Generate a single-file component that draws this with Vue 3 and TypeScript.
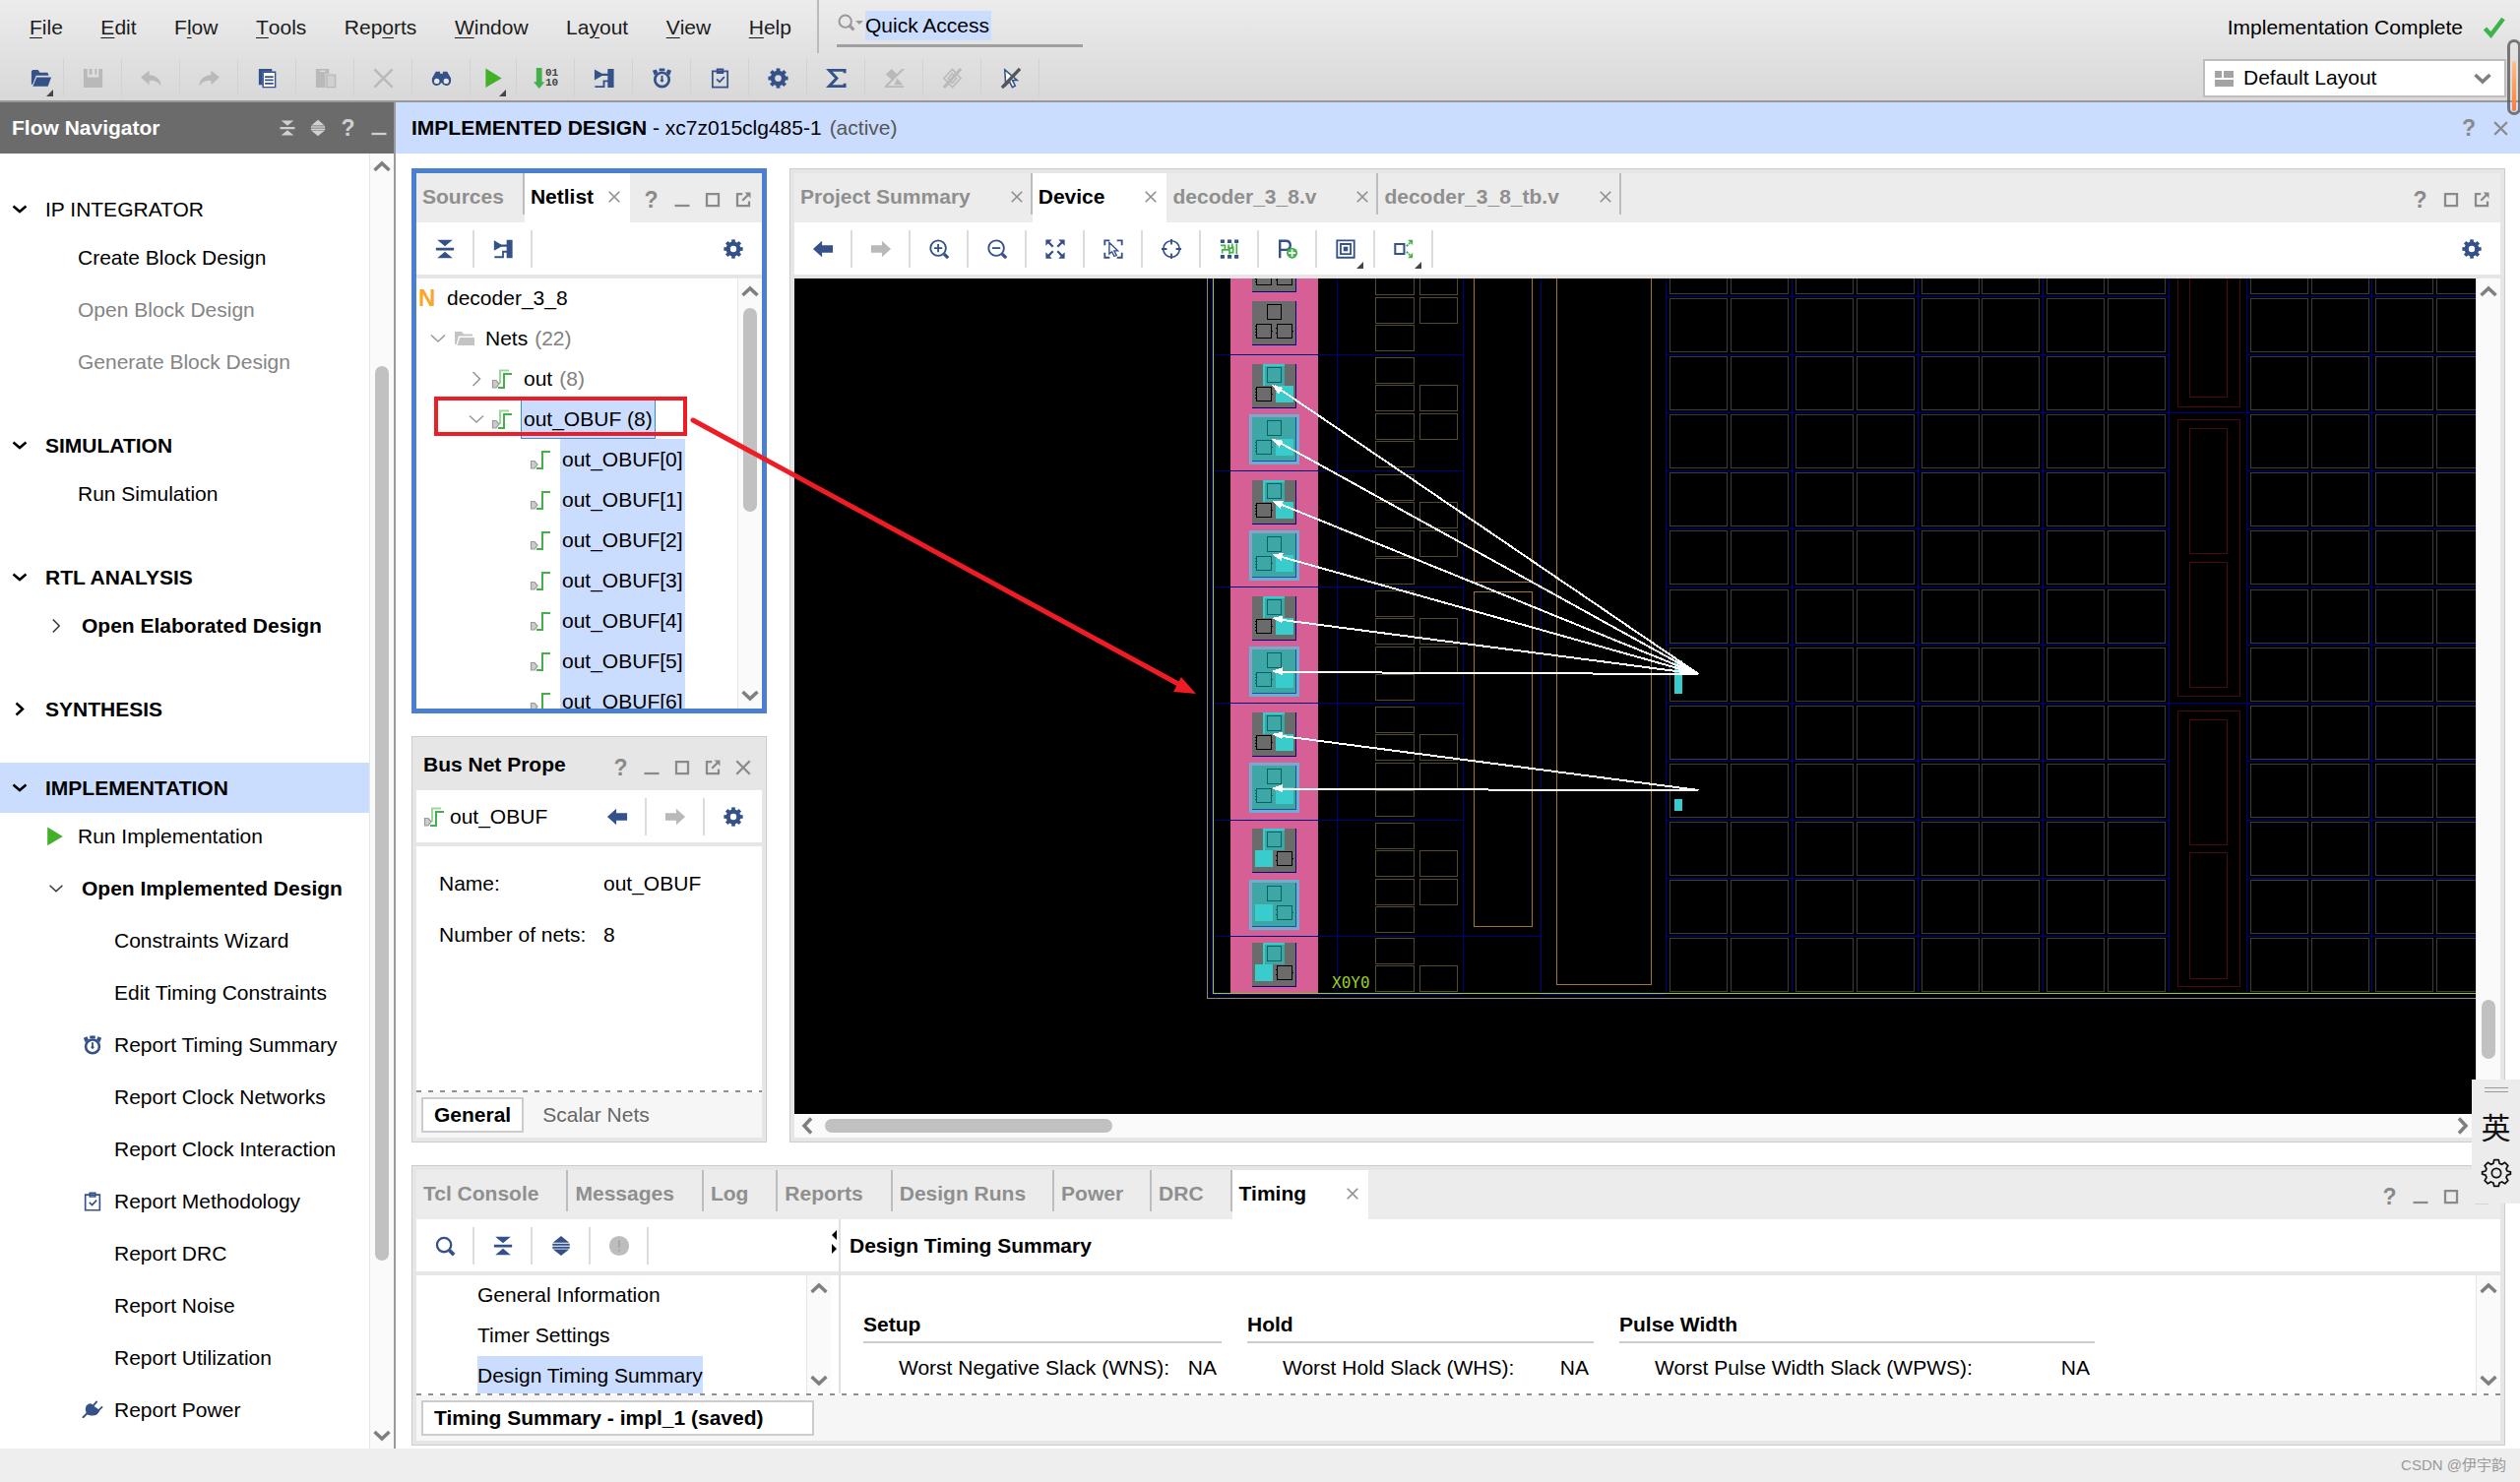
<script setup lang="ts">
import { h, ref } from 'vue'

interface NavItem { text: string; kind?: 'bold' | 'leaf' | 'off'; icon?: string }
interface NavSection { title: string; bold: boolean; open: boolean; active?: boolean; items: NavItem[] }

const Icon = (p: { n: string }) =>
  h('svg', { class: 'ic', viewBox: '0 0 24 24', 'aria-hidden': 'true' }, [h('use', { href: '#' + p.n })])
Icon.props = ['n']

const Scroll = (p: { parts: number[]; across?: boolean }) =>
  h('div', { class: ['scroll', p.across ? 'across' : 'down'] }, [
    h('button', { class: 'arrow first', 'aria-label': 'Scroll back' }, [h(Icon, { n: 'i-chev' })]),
    h('span', { style: { flexGrow: p.parts[0] } }),
    h('span', { class: 'thumb', style: { flexGrow: p.parts[1] } }),
    h('span', { style: { flexGrow: p.parts[2] } }),
    h('button', { class: 'arrow last', 'aria-label': 'Scroll on' }, [h(Icon, { n: 'i-chev' })]),
  ])
Scroll.props = ['parts', 'across']

const menus = [
  ['', 'F', 'ile'], ['', 'E', 'dit'], ['F', 'l', 'ow'], ['', 'T', 'ools'], ['Rep', 'o', 'rts'],
  ['', 'W', 'indow'], ['La', 'y', 'out'], ['', 'V', 'iew'], ['', 'H', 'elp'],
]

const tools = [
  { n: 'i-open', l: 'Open', drop: true }, { n: 'i-save', l: 'Save', off: true }, { n: 'i-undo', l: 'Undo', off: true },
  { n: 'i-redo', l: 'Redo', off: true }, { n: 'i-copy', l: 'Copy' }, { n: 'i-paste', l: 'Paste', off: true },
  { n: 'i-x', l: 'Delete', off: true }, { n: 'i-find', l: 'Find' }, { n: 'i-play', l: 'Run', drop: true },
  { n: 'i-bits', l: 'Generate bitstream' }, { n: 'i-net', l: 'Schematic' }, { n: 'i-timer', l: 'Timing' },
  { n: 'i-clip', l: 'Methodology' }, { n: 'i-gear', l: 'Settings' }, { n: 'i-sigma', l: 'Summary' },
  { n: 'i-mark', l: 'Unmark', off: true }, { n: 'i-high', l: 'Unhighlight', off: true }, { n: 'i-unsel', l: 'Unselect' },
]

const sections: NavSection[] = [
  { title: 'IP INTEGRATOR', bold: false, open: true, items: [
    { text: 'Create Block Design' }, { text: 'Open Block Design', kind: 'off' }, { text: 'Generate Block Design', kind: 'off' }] },
  { title: 'SIMULATION', bold: true, open: true, items: [{ text: 'Run Simulation' }] },
  { title: 'RTL ANALYSIS', bold: true, open: true, items: [{ text: 'Open Elaborated Design', kind: 'bold', icon: 'i-thin-right' }] },
  { title: 'SYNTHESIS', bold: true, open: false, items: [] },
  { title: 'IMPLEMENTATION', bold: true, open: true, active: true, items: [
    { text: 'Run Implementation', icon: 'i-play' },
    { text: 'Open Implemented Design', kind: 'bold', icon: 'i-thin-down' },
    { text: 'Constraints Wizard', kind: 'leaf' },
    { text: 'Edit Timing Constraints', kind: 'leaf' },
    { text: 'Report Timing Summary', kind: 'leaf', icon: 'i-timer' },
    { text: 'Report Clock Networks', kind: 'leaf' },
    { text: 'Report Clock Interaction', kind: 'leaf' },
    { text: 'Report Methodology', kind: 'leaf', icon: 'i-clip' },
    { text: 'Report DRC', kind: 'leaf' },
    { text: 'Report Noise', kind: 'leaf' },
    { text: 'Report Utilization', kind: 'leaf' },
    { text: 'Report Power', kind: 'leaf', icon: 'i-plug' }] },
]

const bits = [0, 1, 2, 3, 4, 5, 6]
const deviceTabs = ['Project Summary', 'Device', 'decoder_3_8.v', 'decoder_3_8_tb.v']
const deviceTools = [
  { n: 'i-back', l: 'Back' }, { n: 'i-fwd', l: 'Forward', off: true }, { n: 'i-zin', l: 'Zoom in' }, { n: 'i-zout', l: 'Zoom out' },
  { n: 'i-fit', l: 'Zoom fit' }, { n: 'i-sel', l: 'Select area' }, { n: 'i-target', l: 'Autofit' }, { n: 'i-route', l: 'Routing' },
  { n: 'i-pblock', l: 'Draw Pblock' }, { n: 'i-cell', l: 'Cell mode', drop: true }, { n: 'i-conn', l: 'Connectivity', drop: true },
]
const logTabs = ['Tcl Console', 'Messages', 'Log', 'Reports', 'Design Runs', 'Power', 'DRC']
const timing = [
  { title: 'Setup', label: 'Worst Negative Slack (WNS):', value: 'NA' },
  { title: 'Hold', label: 'Worst Hold Slack (WHS):', value: 'NA' },
  { title: 'Pulse Width', label: 'Worst Pulse Width Slack (WPWS):', value: 'NA' },
]
const query = ref('Quick Access')

// Device floorplan, in fabric coordinates
type Tile = { y: number; big: boolean; used: 'right' | 'left' | '' }
const tiles: Tile[] = [
  { y: 252, big: false, used: '' }, { y: 306, big: false, used: '' },
  { y: 370, big: false, used: 'right' }, { y: 424, big: true, used: 'right' },
  { y: 488, big: false, used: 'right' }, { y: 542, big: true, used: 'right' },
  { y: 606, big: false, used: 'right' }, { y: 660, big: true, used: 'right' },
  { y: 724, big: false, used: 'right' }, { y: 778, big: true, used: 'right' },
  { y: 842, big: false, used: 'left' }, { y: 897, big: true, used: 'left' },
  { y: 958, big: false, used: 'left' },
]
const ioRows = [360, 478, 596, 714, 833]
const olive: [number, number][] = []
for (const s of [245, 363, 482, 600, 718, 836, 953]) {
  const n = s === 953 ? 2 : 4
  for (let i = 0; i < n; i++) {
    olive.push([1397, s + i * 28 + (i > 1 ? 1 : 0)])
    if (i === 1 || i === 2) olive.push([1442, s + i * 28 + (i > 1 ? 1 : 0)])
  }
}
const clbCols = [1696, 1758, 1824, 1886, 1952, 2013, 2079, 2141, 2286, 2348, 2413, 2475]
const clbRows = [244, 303, 362, 421, 480, 539, 599, 658, 717, 776, 835, 894, 953]
const clbLines = [301, 360, 419, 478, 537, 596, 655, 714, 773, 833, 892, 951]
const clbVert = [1692, 1820, 1948, 2075, 2203, 2282, 2409]
const flights = [391, 446, 509, 563, 628, 682].map(y => ({ y, sy: 685 })).concat([746, 801].map(y => ({ y, sy: 803 })))
const head = (f: { y: number; sy: number }) => (Math.atan2(f.sy - f.y, 1725 - 1292) * 180) / Math.PI
</script>

<template>
  <div class="app">
    <svg class="defs" aria-hidden="true">
      <symbol id="i-chev" viewBox="0 0 24 24"><path d="M4.500 16 12 9l7.500 7" fill="none" stroke="#7f7f7f" stroke-width="3.500" /></symbol>
      <symbol id="i-down" viewBox="0 0 24 24"><path d="M5.500 8.500 12 14l6.500-5.500" fill="none" stroke="currentColor" stroke-width="2.500" /></symbol>
      <symbol id="i-right" viewBox="0 0 24 24"><path d="m8.500 5.500 6.500 6-6.500 6" fill="none" stroke="currentColor" stroke-width="2.500" /></symbol>
      <symbol id="i-thin-down" viewBox="0 0 24 24"><path d="M5 8.500 12 15l7-6.500" fill="none" stroke="currentColor" stroke-width="1.600" /></symbol>
      <symbol id="i-thin-right" viewBox="0 0 24 24"><path d="m8.500 5 7 7-7 7" fill="none" stroke="currentColor" stroke-width="1.600" /></symbol>
      <symbol id="i-open" viewBox="0 0 24 24"><path fill="currentColor" d="M2 19V4.500L3.500 3H9l2 3h8l1 1.500V9H7L3.500 18zM7.500 11H23l-3.500 9.500h-16z" /></symbol>
      <symbol id="i-save" viewBox="0 0 24 24"><path fill="currentColor" d="M2 2h4v9h12V2h4v20H2zM8 2h3v6H8zm6 0h2v6h-2z" /></symbol>
      <symbol id="i-undo" viewBox="0 0 24 24"><path fill="currentColor" d="M1 11 10 4v4.500C18 9 22 13 22.500 20 19 15.500 15 14 10 14.500V19z" /></symbol>
      <symbol id="i-redo" viewBox="0 0 24 24"><path fill="currentColor" d="m23 11-9-7v4.500C6 9 2 13 1.500 20 5 15.500 9 14 14 14.500V19z" /></symbol>
      <symbol id="i-copy" viewBox="0 0 24 24"><path fill="currentColor" d="M3 2h14v3H7v14H3z" /><path fill="#fff" stroke="currentColor" stroke-width="1.500" d="M7.500 5.500H20.500V21.500H7.500z" /><path stroke="currentColor" stroke-width="1.800" d="M9.500 10.500h9M9.500 14h9M9.500 17.500h9" /></symbol>
      <symbol id="i-paste" viewBox="0 0 24 24"><path fill="currentColor" d="M2 2h14v5h-4v15H2z" /><path fill="#d0d0d0" stroke="currentColor" stroke-width="1.500" d="M13.500 8.500H22.500V21.500h-9z" /><path stroke="#ddd" stroke-width="1.500" d="M6 4.500h6" /></symbol>
      <symbol id="i-x" viewBox="0 0 24 24"><path fill="none" stroke="currentColor" stroke-width="2.500" d="M2.500 2.500 21.500 21.500M21.500 2.500 2.500 21.500" /></symbol>
      <symbol id="i-find" viewBox="0 0 24 24"><path fill="currentColor" d="M6 5h4.500v2h3V5H18l4 7v3.500a5 5 0 0 1-9.500 1.500h-1A5 5 0 0 1 2 15.500V12z" /><circle cx="7" cy="15" r="2.800" fill="#e6e8ee" /><circle cx="17" cy="15" r="2.800" fill="#e6e8ee" /></symbol>
      <symbol id="i-play" viewBox="0 0 24 24"><path fill="#43b02a" d="M3.500 1.500 20.500 12 3.500 22z" /></symbol>
      <symbol id="i-bits" viewBox="0 0 24 24"><path fill="#43b04a" d="M4 1h6v15h3L7 23 1 16h3z" /></symbol>
      <symbol id="i-net" viewBox="0 0 24 24"><path fill="currentColor" d="M2 2.500 10 7h6V2h6.500v20H16v-6h-3v6H2.500v-2H11v-6h5V9.500h-6L2 14z" /></symbol>
      <symbol id="i-timer" viewBox="0 0 24 24"><circle cx="12" cy="13.500" r="7.500" fill="none" stroke="currentColor" stroke-width="2.800" /><path fill="currentColor" d="M9 1.500h6v3H9zM2 4l4-1.500L7.500 6 4 9zM22 4l-4-1.500L16.500 6 20 9zM11 9h2v4l1 1.500-2 2-2-2L11 13z" /></symbol>
      <symbol id="i-clip" viewBox="0 0 24 24"><path fill="none" stroke="currentColor" stroke-width="1.800" d="M4 4.500h16v17H4zM9 2.500h6v4H9zM8.500 13l3 3 5-5.500" /></symbol>
      <symbol id="i-gear" viewBox="0 0 24 24"><circle cx="12" cy="12" r="5.800" fill="none" stroke="currentColor" stroke-width="4.600" /><rect v-for="a in 8" :key="a" x="10" y="1.500" width="4" height="4.500" fill="currentColor" :transform="`rotate(${a * 45} 12 12)`" /></symbol>
      <symbol id="i-sigma" viewBox="0 0 24 24"><path fill="none" stroke="currentColor" stroke-width="3" d="M21 6.500V3.500H4.500L12.500 12l-8 8.500H21v-3" /></symbol>
      <symbol id="i-mark" viewBox="0 0 24 24"><path fill="currentColor" d="m3 8 6-6 6 6-5 6zM2 20h20v2H2zM15 12l6 7h-9zM20 2h3L5 20H2z" /></symbol>
      <symbol id="i-high" viewBox="0 0 24 24"><path fill="none" stroke="currentColor" stroke-width="1.600" d="m12 2.500 9 9.500-9 9.500L3 12zM12 7l4.500 5-4.500 5-4.500-5z" /><path stroke="currentColor" stroke-width="3" d="M21 2 3 22" /></symbol>
      <symbol id="i-unsel" viewBox="0 0 24 24"><path fill="#fff" stroke="currentColor" stroke-width="1.600" d="m6 3 13 11h-5l3 6-3 1.500-3-6-4 4z" /><path stroke="#555" stroke-width="3.500" d="M22 2 3 22" /></symbol>
      <symbol id="i-plug" viewBox="0 0 24 24"><path fill="currentColor" d="M5 7q5-5 8 0l7 5q-2 7-10 6l-4-1-4 4-2-1 5-5q-2-4 0-8z" /><path stroke="currentColor" stroke-width="2" d="m12 8 5-6M18 13l5-5" /></symbol>
      <symbol id="i-collapse" viewBox="0 0 24 24"><path fill="currentColor" d="M3.500 2h17L12 9zM2 10.500h20v3H2zM3.500 22h17L12 15z" /></symbol>
      <symbol id="i-expand" viewBox="0 0 24 24"><path fill="currentColor" d="M12 1 21 8.500H3zM2.500 9.500h19v2.200h-19zM2.500 12.700h19v2.200h-19zM12 23l9-7.200H3z" /></symbol>
      <symbol id="i-min" viewBox="0 0 24 24"><path stroke="currentColor" stroke-width="3" d="M2 20h20" /></symbol>
      <symbol id="i-max" viewBox="0 0 24 24"><path fill="none" stroke="currentColor" stroke-width="3" d="M4 4h16v16H4z" /></symbol>
      <symbol id="i-pop" viewBox="0 0 24 24"><path fill="none" stroke="currentColor" stroke-width="3" d="M11 4H4v16h16v-6M11 13l8-8" /><path fill="currentColor" d="M14 2h8v8z" /></symbol>
      <symbol id="i-close" viewBox="0 0 24 24"><path stroke="currentColor" stroke-width="3" d="m3 3 18 18M21 3 3 21" /></symbol>
      <symbol id="i-back" viewBox="0 0 24 24"><path fill="currentColor" d="M1 12 11 3v5h12v8H11v5z" /></symbol>
      <symbol id="i-fwd" viewBox="0 0 24 24"><path fill="currentColor" d="M23 12 13 3v5H1v8h12v5z" /></symbol>
      <symbol id="i-zin" viewBox="0 0 24 24"><circle cx="11" cy="11" r="8.500" fill="none" stroke="currentColor" stroke-width="2" /><path stroke="currentColor" stroke-width="2" d="M6.500 11h9M11 6.500v9" /><path stroke="currentColor" stroke-width="3.500" d="m17.500 17.500 4.500 4.500" /></symbol>
      <symbol id="i-zout" viewBox="0 0 24 24"><circle cx="11" cy="11" r="8.500" fill="none" stroke="currentColor" stroke-width="2" /><path stroke="currentColor" stroke-width="2" d="M6.500 11h9" /><path stroke="currentColor" stroke-width="3.500" d="m17.500 17.500 4.500 4.500" /></symbol>
      <symbol id="i-search" viewBox="0 0 24 24"><circle cx="11" cy="11" r="7.800" fill="none" stroke="currentColor" stroke-width="2.500" /><path stroke="currentColor" stroke-width="4" d="m17 17 5 5" /></symbol>
      <symbol id="i-fit" viewBox="0 0 24 24"><path fill="currentColor" d="M1.500 1.500h7l-7 7zM22.500 1.500h-7l7 7zM1.500 22.500h7l-7-7zM22.500 22.500h-7l7-7z" /><path stroke="currentColor" stroke-width="2.500" d="m4 4 5.500 5.500M20 4l-5.500 5.500M4 20l5.500-5.500M20 20l-5.500-5.500" /></symbol>
      <symbol id="i-sel" viewBox="0 0 24 24"><path fill="none" stroke="currentColor" stroke-width="2" d="M2.500 8V2.500H8M16 2.500h5.500V8M2.500 16v5.500H8M21.500 16v5.500H16" /><path fill="#fff" stroke="currentColor" stroke-width="1.500" d="m7.500 5 9.500 9h-4l2.500 5-2.500 1-2.500-5-3 2.500z" /></symbol>
      <symbol id="i-target" viewBox="0 0 24 24"><circle cx="12" cy="12" r="9" fill="none" stroke="currentColor" stroke-width="1.800" /><path stroke="currentColor" stroke-width="2" d="M12 1v6M12 17v6M1 12h6M17 12h6" /></symbol>
      <symbol id="i-route" viewBox="0 0 24 24"><path fill="currentColor" d="M2 1.500h4.500v4H2zM9.800 1.500h4.500v4H9.800zM17.500 1.500H22v4h-4.500zM2 18.500h4.500v4H2zM9.800 18.500h4.500v4H9.800zM17.500 18.500H22v4h-4.500z" /><path fill="none" stroke="#43b04a" stroke-width="1.800" d="M4 17v-4h8v5M2 8h5v5M11 7v4h4V6M20 6v12M12 16h4V9" /></symbol>
      <symbol id="i-pblock" viewBox="0 0 24 24"><path fill="none" stroke="currentColor" stroke-width="2.600" d="M3.500 22V3H10q5 0 5 5t-5 5H4" /><circle cx="17" cy="16.500" r="6" fill="#43b04a" /><path stroke="#fff" stroke-width="2" d="M13 16.500h8M17 12.500v8" /></symbol>
      <symbol id="i-cell" viewBox="0 0 24 24"><path fill="none" stroke="currentColor" stroke-width="2" d="M2.500 2.500h19v19h-19zM6.500 6.500h11v11h-11z" /><path fill="currentColor" d="M9.500 9.500h5v5h-5z" /></symbol>
      <symbol id="i-conn" viewBox="0 0 24 24"><path fill="none" stroke="currentColor" stroke-width="2.200" d="M2.500 6.500h10v11h-10z" /><path fill="none" stroke="#43b04a" stroke-width="2" d="m15 9 4-4M15 15l4 4" stroke-dasharray="2.500 1" /><path fill="#43b04a" d="M16.500 2H22v6zM16.500 22H22v-6z" /></symbol>
      <symbol id="i-folder" viewBox="0 0 24 24"><path fill="#c4c4c4" d="M3 18V5h7l2 2.500h9V9.500H7L4.500 18zM8 11h15v8H5.500z" /></symbol>
      <symbol id="i-bus" viewBox="0 0 24 24"><path fill="none" stroke="#9bd79b" stroke-width="2" d="M10 17V3.500h9" /><path fill="none" stroke="#43b04a" stroke-width="2" d="M8 21h6V7h8" /><path fill="#ccc" stroke="#999" stroke-width="1.200" d="M2.500 13.500H6l3 3.500-3 4H2.500z" /></symbol>
      <symbol id="i-wire" viewBox="0 0 24 24"><path fill="none" stroke="#43b04a" stroke-width="2" d="M8 21h6V4h8" /><path fill="#ccc" stroke="#999" stroke-width="1.200" d="M2.500 13.500H6l3 3.500-3 4H2.500z" /></symbol>
      <symbol id="i-info" viewBox="0 0 24 24"><circle cx="12" cy="12" r="11" fill="#bdbdbd" /><path stroke="#a5a5a5" stroke-width="2" d="M12 6v8M12 16v2" /></symbol>
      <symbol id="i-check" viewBox="0 0 24 24"><path fill="none" stroke="#3cb44a" stroke-width="4.500" d="m2.500 13 6 6.500L21 3" /></symbol>
      <symbol id="i-cog" viewBox="0 0 24 24"><path fill="none" stroke="currentColor" stroke-width="1.300" stroke-linejoin="round" d="M10.300 2h3.400l.6 2.700 1.900.8L18.500 4l2.400 2.400-1.400 2.300.7 1.800 2.600.6v1.800l-2.600.7-.7 1.800 1.400 2.300-2.400 2.400-2.300-1.400-1.900.8-.6 2.600h-3.400l-.6-2.600-1.900-.8-2.300 1.400-2.400-2.400 1.400-2.300-.7-1.800-2.600-.7v-1.800l2.600-.6.7-1.800-1.400-2.300L5.500 4l2.300 1.500 1.900-.8z" /><circle cx="12" cy="12" r="3.500" fill="none" stroke="currentColor" stroke-width="1.300" /></symbol>
    </svg>

    <header class="top">
      <div class="top-left">
        <div class="menu-row">
          <nav class="menus">
            <button v-for="m in menus" :key="m.join('')">{{ m[0] }}<u>{{ m[1] }}</u>{{ m[2] }}</button>
          </nav>
          <label class="quick">
            <Icon n="i-search" /><span class="tri" aria-hidden="true"></span>
            <input v-model="query" type="text" aria-label="Quick Access" />
          </label>
        </div>
        <div class="tool-row">
          <button v-for="t in tools" :key="t.n" :class="['tool', { off: t.off, drop: t.drop }]" :aria-label="t.l">
            <Icon :n="t.n" /><span v-if="t.n === 'i-bits'" class="bit">01<br />10</span>
          </button>
        </div>
      </div>
      <div class="top-right">
        <div class="status">Implementation Complete<Icon n="i-check" /></div>
        <label class="combo">
          <span class="blocks" aria-hidden="true"><i></i><i></i><i></i></span>
          <select aria-label="Layout"><option>Default Layout</option></select>
          <Icon n="i-chev" />
        </label>
      </div>
    </header>

    <div class="body">
      <aside class="flow">
        <div class="flow-head">
          <h2>Flow Navigator</h2>
          <button aria-label="Collapse all"><Icon n="i-collapse" /></button>
          <button aria-label="Expand all"><Icon n="i-expand" /></button>
          <button class="q" aria-label="Help">?</button>
          <button aria-label="Minimize"><Icon n="i-min" /></button>
        </div>
        <div class="flow-body">
          <div class="flow-list">
            <section v-for="s in sections" :key="s.title">
              <h3 :class="{ bold: s.bold, active: s.active }"><Icon :n="s.open ? 'i-down' : 'i-right'" />{{ s.title }}</h3>
              <ul v-if="s.items.length">
                <li v-for="i in s.items" :key="i.text" :class="i.kind">
                  <span class="slot"><Icon v-if="i.icon" :n="i.icon" /></span><a href="#">{{ i.text }}</a>
                </li>
              </ul>
            </section>
          </div>
          <Scroll :parts="[190, 909, 165]" />
        </div>
      </aside>

      <main class="main">
        <div class="design-head">
          <h1>IMPLEMENTED DESIGN</h1><span>&nbsp;- xc7z015clg485-1</span><span class="dim">(active)</span>
          <button class="q" aria-label="Help">?</button>
          <button aria-label="Close"><Icon n="i-close" /></button>
        </div>

        <div class="work">
          <div class="upper">
            <div class="side">
              <section class="panel netlist">
                <div class="tabs tight">
                  <div class="tab"><button>Sources</button></div>
                  <div class="tab on"><button>Netlist</button><button class="x" aria-label="Close"><Icon n="i-close" /></button></div>
                  <div class="winbtns">
                    <button class="q" aria-label="Help">?</button><button aria-label="Minimize"><Icon n="i-min" /></button>
                    <button aria-label="Maximize"><Icon n="i-max" /></button><button aria-label="Float"><Icon n="i-pop" /></button>
                  </div>
                </div>
                <div class="bar">
                  <button class="cell" aria-label="Collapse all"><Icon n="i-collapse" /></button>
                  <button class="cell" aria-label="Schematic"><Icon n="i-net" /></button>
                  <button class="cell end" aria-label="Settings"><Icon n="i-gear" /></button>
                </div>
                <div class="pane">
                  <ul class="tree">
                    <li class="l0"><b class="n">N</b>decoder_3_8</li>
                    <li class="l1"><Icon n="i-thin-down" /><Icon n="i-folder" /><span>Nets</span><em>(22)</em></li>
                    <li class="l2"><Icon n="i-thin-right" /><Icon n="i-bus" /><span>out</span><em>(8)</em></li>
                    <li class="l2 picked"><Icon n="i-thin-down" /><Icon n="i-bus" /><mark class="framed">out_OBUF (8)</mark></li>
                    <li v-for="b in bits" :key="b" class="l3"><Icon n="i-wire" /><mark>out_OBUF[{{ b }}]</mark></li>
                  </ul>
                  <Scroll :parts="[4, 207, 174]" />
                </div>
              </section>

              <section class="panel props">
                <div class="prop-head">
                  <h2>Bus Net Prope</h2>
                  <div class="winbtns">
                    <button class="q" aria-label="Help">?</button><button aria-label="Minimize"><Icon n="i-min" /></button>
                    <button aria-label="Maximize"><Icon n="i-max" /></button><button aria-label="Float"><Icon n="i-pop" /></button>
                    <button aria-label="Close"><Icon n="i-close" /></button>
                  </div>
                </div>
                <div class="bar">
                  <span class="which"><Icon n="i-bus" />out_OBUF</span>
                  <button class="cell push" aria-label="Back"><Icon n="i-back" /></button>
                  <button class="cell off" aria-label="Forward"><Icon n="i-fwd" /></button>
                  <button class="cell last" aria-label="Settings"><Icon n="i-gear" /></button>
                </div>
                <dl class="facts">
                  <dt>Name:</dt><dd>out_OBUF</dd>
                  <dt>Number of nets:</dt><dd>8</dd>
                </dl>
                <div class="foot"><button class="on">General</button><button>Scalar Nets</button></div>
              </section>
            </div>

            <section class="panel device">
              <div class="tabs">
                <div v-for="t in deviceTabs" :key="t" :class="['tab', { on: t === 'Device' }]">
                  <button>{{ t }}</button><button class="x" aria-label="Close"><Icon n="i-close" /></button>
                </div>
                <div class="winbtns">
                  <button class="q" aria-label="Help">?</button><button aria-label="Maximize"><Icon n="i-max" /></button>
                  <button aria-label="Float"><Icon n="i-pop" /></button>
                </div>
              </div>
              <div class="bar">
                <button v-for="t in deviceTools" :key="t.n" :class="['cell', { off: t.off, drop: t.drop }]" :aria-label="t.l"><Icon :n="t.n" /></button>
                <button class="cell end" aria-label="Settings"><Icon n="i-gear" /></button>
              </div>
              <div class="pane">
                <div class="view">
                  <svg class="fabric" role="img" aria-label="Device floorplan">
                    <g transform="translate(-807 -283)" shape-rendering="crispEdges" fill="none">
                      <rect x="1250" y="200" width="89" height="809" fill="#d65f96" />
                      <g stroke="#000080">
                        <path d="M1231.500 200V1010.500H1486M1358.500 200V1010M1486.500 200V1010M1565.500 200V1010.500H1692M1232 951.500H1565" />
                        <path v-for="y in ioRows" :key="y" :d="`M1232 ${y + 0.5}H1487`" />
                        <path v-for="y in clbLines" :key="y" :d="`M1692 ${y + 0.5}H2203M2282 ${y + 0.5}H2800`" />
                        <path v-for="x in clbVert" :key="x" :d="`M${x + 0.5} 200V1009`" />
                        <path d="M2203 419.500h79M2203 714.500h79" />
                      </g>
                      <g stroke="#554a2a">
                        <rect v-for="(o, k) in olive" :key="k" :x="o[0] + 0.5" :y="o[1] + 0.5" :width="o[0] === 1397 ? 39 : 38" height="26" />
                      </g>
                      <g stroke="#a87528">
                        <path d="M1497.500 200V591.500H1556.500V200M1497.500 601.500h59V941.500h-59zM1581.500 200V1000.500H1677.500V200" />
                      </g>
                      <g stroke="#3c3c3c">
                        <template v-for="x in clbCols" :key="x">
                          <rect v-for="y in clbRows" :key="y" :x="x + 0.5" :y="y + 0.5" width="58" height="54" />
                        </template>
                      </g>
                      <g stroke="#4a0a14">
                        <path d="M2212.500 200V413.500H2275.500V200M2212.500 426.500h63v281h-63zM2212.500 722.500h63v280h-63zM2224.500 200V403.500H2262.500V200M2224.500 435.500h38v127h-38zM2224.500 571.500h38v127h-38zM2224.500 731.500h38v127h-38zM2224.500 866.500h38v128h-38z" />
                      </g>
                      <path d="M1226.500 200V1014.500H2800" stroke="#8c8c8c" />
                      <path d="M1232.500 200V1009.500H2800" stroke="#9acd20" />

                      <g v-for="t in tiles" :key="t.y" :transform="`translate(1272 ${t.y})`">
                        <rect v-if="t.big" x="-2.500" y="-2.500" width="50" height="50" fill="#8aa0c8" stroke="#54bcd4" />
                        <rect width="45" height="45" :fill="t.big ? '#3fa6a6' : '#6b6b6b'" />
                        <path d="M0 44.500H44.500V0" :stroke="t.big ? '#0058b0' : '#000080'" />
                        <template v-if="t.used && !t.big">
                          <rect x="11" y="0" width="22" height="22" fill="#3fa6a6" />
                          <path d="M12 22V1H33" stroke="#38cccc" stroke-width="2" />
                        </template>
                        <rect x="15.500" y="3.500" width="14" height="15" :stroke="t.used ? '#006464' : '#000'" />
                        <g :stroke="t.big ? '#006464' : '#000'">
                          <path v-if="t.used !== 'left'" d="M4.500 23.500h15v14h-15zM3 25.500h1M3 28.500h1M3 31.500h1M3 34.500h1M20 30.500h1" />
                          <path v-if="t.used !== 'right'" d="M25.500 23.500h15v14h-15zM24 27.500h1M24 32.500h1M41 30.500h1" />
                        </g>
                        <rect v-if="t.used" :x="t.used === 'right' ? 24 : 3" y="22" width="18" height="17" fill="#38cccc" />
                      </g>

                      <rect x="1701" y="671" width="8" height="34" fill="#38cccc" />
                      <rect x="1701" y="812" width="8" height="12" fill="#38cccc" />
                      <g stroke="#fff" stroke-width="2">
                        <path v-for="f in flights" :key="f.y" :d="`M1725.500 ${f.sy}L1295 ${f.y + 1}`" />
                      </g>
                      <path d="M1726 686 1708 673l-4 5 2 6z" fill="#fff" />
                      <path v-for="f in flights" :key="f.y" d="M0 0 11-4V4z" fill="#fff" :transform="`translate(1292 ${f.y}) rotate(${head(f)})`" />
                      <text x="1353" y="1004" class="region">X0Y0</text>
                    </g>
                  </svg>
                  <Scroll :parts="[5, 292, 1359]" :across="true" />
                </div>
                <Scroll class="short" :parts="[706, 60, 30]" />
              </div>
            </section>
          </div>

          <section class="panel lower">
            <div class="tabs wide">
              <div v-for="t in logTabs" :key="t" class="tab"><button>{{ t }}</button></div>
              <div class="tab on"><button>Timing</button><button class="x" aria-label="Close"><Icon n="i-close" /></button></div>
              <div class="winbtns">
                <button class="q" aria-label="Help">?</button><button aria-label="Minimize"><Icon n="i-min" /></button>
                <button aria-label="Maximize"><Icon n="i-max" /></button><button aria-label="Float"><Icon n="i-pop" /></button>
              </div>
            </div>
            <div class="split">
              <div class="reports">
                <div class="bar">
                  <button class="cell" aria-label="Search"><Icon n="i-search" /></button>
                  <button class="cell" aria-label="Collapse all"><Icon n="i-collapse" /></button>
                  <button class="cell" aria-label="Expand all"><Icon n="i-expand" /></button>
                  <button class="cell" aria-label="Information"><Icon n="i-info" /></button>
                  <svg class="nudge" viewBox="0 0 6 24" aria-hidden="true"><path d="M6 0v10L1 5zM1 14l5 5-5 5z" /></svg>
                </div>
                <div class="pane">
                  <ul class="list"><li><span>General Information</span></li><li><span>Timer Settings</span></li><li><mark>Design Timing Summary</mark></li></ul>
                  <Scroll :parts="[1, 0, 0]" />
                </div>
              </div>
              <div class="summary">
                <div class="bar"><h2>Design Timing Summary</h2></div>
                <div class="pane">
                  <div class="groups">
                    <section v-for="g in timing" :key="g.title">
                      <h3>{{ g.title }}</h3>
                      <dl><dt>{{ g.label }}</dt><dd>{{ g.value }}</dd></dl>
                    </section>
                  </div>
                  <Scroll :parts="[1, 0, 0]" />
                </div>
              </div>
            </div>
            <div class="foot"><button class="on run">Timing Summary - impl_1 (saved)</button></div>
          </section>
        </div>
      </main>
    </div>
    <footer class="bottom">CSDN @伊宇韵</footer>

    <svg class="notes" aria-hidden="true">
      <rect x="443" y="405" width="253" height="36" fill="none" stroke="#ee1c25" stroke-width="4" />
      <path d="M704 427 1197 695" stroke="#ee1c25" stroke-width="5" stroke-linecap="round" />
      <path d="m1215 705-23-2 8-15z" fill="#ee1c25" />
    </svg>
    <div class="pill" aria-hidden="true"><i></i></div>
    <div class="ime"><span class="grip"></span><span lang="zh">英</span><Icon n="i-cog" /></div>
  </div>
</template>

<style>
html, body { margin: 0; height: 100%; }
#app { height: 100%; }
button { border: 0; padding: 0; margin: 0; background: none; font: inherit; color: inherit; display: flex; align-items: center; justify-content: center; }
.ic { width: 24px; height: 24px; flex: none; display: block; }
.scroll { display: flex; flex: none; background: #fafafa; }
.scroll.down { flex-direction: column; width: 24px; border-left: 1px solid #e6e6e6; }
.scroll.across { height: 24px; }
.scroll > span { flex-basis: 0; }
.scroll .arrow { flex: none; width: 24px; height: 26px; }
.scroll.across .arrow { width: 26px; height: 24px; }
.scroll.down .last .ic { transform: rotate(180deg); }
.scroll.across .first .ic { transform: rotate(-90deg); }
.scroll.across .last .ic { transform: rotate(90deg); }
.scroll .thumb { background: #c1c1c1; border-radius: 7px; margin: 0 5px; }
.scroll.across .thumb { margin: 5px 0; }
</style>

<style scoped>
.app { position: relative; display: flex; flex-direction: column; height: 100%; min-height: 1200px; background: #fff; color: #000; font: 21px/24px "Liberation Sans", "Noto Sans CJK SC", sans-serif; overflow: hidden; white-space: nowrap; }
.defs { position: absolute; width: 0; height: 0; }
h1, h2, h3, ul, dl, dd { margin: 0; padding: 0; font-size: 21px; line-height: 24px; }
ul { list-style: none; }
em { font-style: normal; color: #808080; }
mark { background: #cbddff; color: #000; }
a { color: inherit; text-decoration: none; }
.q { font-weight: bold; font-size: 23px; }

.top { display: flex; justify-content: space-between; height: 102px; flex: none; background: linear-gradient(#ececec, #d8d8d8); border-bottom: 2px solid #999; }
.menu-row { display: flex; height: 54px; }
.menus { display: flex; justify-content: space-between; width: 774px; padding: 2px 26px 0 30px; border-right: 2px solid #bbb; }
.menus button { color: #1c1c1c; }
.menus u { text-underline-offset: 3px; text-decoration-thickness: 1px; }
.quick { display: flex; align-items: center; width: 250px; height: 45px; margin-left: 18px; border-bottom: 3px solid #a0a0a0; color: #999; }
.quick .ic { width: 19px; height: 19px; }
.tri { border: 4px solid transparent; border-top-color: #999; border-bottom: 0; margin-right: 2px; }
.quick input { border: 0; padding: 0; margin: 6px 0 0; width: 128px; height: 30px; background: #cbddff; font: inherit; color: #000; outline: 0; }
.tool-row { display: flex; padding: 6px 0 0 18px; }
.tool { position: relative; width: 59px; height: 38px; color: #34518a; border-right: 1px solid #d2d2d2; box-sizing: border-box; }
.tool .ic { width: 23px; height: 23px; }
.bit { width: 13px; margin-left: -10px; font: bold 11px/10px "Liberation Mono", monospace; color: #444; }
.tool.off { color: #b9b9b9; }
.tool.drop { width: 47px; }
.drop::after { content: ""; position: absolute; right: 10px; bottom: 0; border-left: 7px solid transparent; border-bottom: 7px solid #444; }
.top-right { display: flex; flex-direction: column; align-items: flex-end; padding-right: 14px; }
.status { display: flex; align-items: center; height: 56px; gap: 20px; }
.combo { position: relative; display: flex; align-items: center; width: 308px; height: 39px; margin-top: 4px; box-sizing: border-box; border: 2px solid #bdbdbd; background: #fff; padding: 0 10px; }
.combo .ic { width: 24px; height: 24px; transform: rotate(180deg); pointer-events: none; }
.combo select { appearance: none; border: 0; background: none; font: inherit; color: #000; flex: 1; padding: 0 0 0 10px; margin: 0 0 1px; outline: 0; }
.blocks { display: grid; grid-template-columns: 7px 10px; gap: 2px; }
.blocks i { height: 7px; background: #a3a3a3; }
.blocks i:last-child { grid-column: span 2; }

.body { display: flex; flex: 1; min-height: 0; }
.flow { display: flex; flex-direction: column; width: 400px; flex: none; border-right: 2px solid #9a9a9a; }
.flow-head { display: flex; align-items: center; height: 52px; flex: none; background: #6b6b6b; color: #fff; padding: 0 0 0 12px; }
.flow-head h2 { flex: 1; }
.flow-head button { width: 31px; color: #d0d0d0; }
.flow-head .ic { width: 18px; height: 18px; }
.flow-body { display: flex; flex: 1; min-height: 0; }
.flow-list { flex: 1; padding-top: 31px; overflow: hidden; }
.flow-list section { padding-bottom: 29px; }
.flow-list h3 { display: flex; align-items: center; height: 51px; padding-left: 8px; gap: 14px; font-weight: normal; }
.flow-list h3.bold { font-weight: bold; }
.flow-list h3.active { background: #cbddff; }
.flow-list ul { margin: -3px 0 4px; }
.flow-list li { display: flex; align-items: center; height: 53px; }
.slot { width: 24px; margin: 0 11px 0 44px; color: #34518a; }
.bold .slot { margin-left: 45px; margin-right: 14px; color: #333; }
.leaf .slot { margin-left: 82px; margin-right: 10px; }
.slot .ic { height: 22px; }
li.bold { font-weight: bold; }
li.off { color: #848484; }

.main { display: flex; flex-direction: column; flex: 1; min-width: 0; }
.design-head { display: flex; align-items: center; height: 52px; flex: none; background: #cbddff; padding: 0 4px 0 16px; }
.design-head .dim { flex: 1; margin-left: 8px; color: #555; }
.design-head button { width: 32px; color: #8a8a8a; }
.design-head .ic { width: 17px; height: 17px; }
.work { display: flex; flex-direction: column; flex: 1; min-height: 0; gap: 23px; padding: 15px 15px 3px 16px; }
.upper { display: flex; flex: 1; min-height: 0; gap: 23px; }
.side { display: flex; flex-direction: column; width: 361px; flex: none; gap: 23px; }

.panel { display: flex; flex-direction: column; box-sizing: border-box; border: 1px solid #ccc; padding: 4px; background: #e6e6e6; min-height: 0; }
.netlist { flex: 1; background: #4a7fd1; border-color: #4a7fd1; }
.props { height: 413px; flex: none; }
.device { flex: 1; min-width: 0; }
.tabs { display: flex; height: 50px; flex: none; background: #ececec; color: #8f8f8f; font-weight: bold; }
.tab { display: flex; padding: 0 9px 2px 6px; gap: 40px; background: linear-gradient(#bdbdbd, #bdbdbd) right top / 2px 42px no-repeat; }
.tab.on { background: #fff; color: #000; }
.tight .tab { gap: 14px; padding-left: 6px; }
.tight .tab:first-child { padding-right: 21px; }
.wide .tab { padding-left: 7px; }
.wide .tab:not(.on) { padding-right: 30px; }
.wide .tab:nth-child(n + 5):not(.on) { padding-right: 29px; }
.x { color: #909090; }
.x .ic { width: 14px; height: 14px; }
.winbtns { display: flex; margin-left: auto; padding: 4px 4px 0 0; color: #8a8a8a; }
.winbtns button { width: 31px; }
.winbtns .ic { width: 18px; height: 18px; }
.bar { display: flex; align-items: center; height: 53px; flex: none; background: #fff; border-bottom: 4px solid #e6e6e6; }
.cell { position: relative; width: 59px; height: 38px; box-sizing: border-box; border-right: 2px solid #dcdcdc; color: #34518a; }
.cell .ic { width: 22px; height: 22px; }
.cell.off { color: #b9b9b9; }
.cell.end { margin-left: auto; border: 0; }
.cell.last { border: 0; width: 58px; }
.cell.push { margin-left: auto; }
.cell.drop::after { bottom: -1px; }
.pane { display: flex; flex: 1; min-height: 0; background: #fff; }

.tree { flex: 1; overflow: hidden; margin-top: -1px; }
.tree li { display: flex; align-items: center; height: 41px; }
.tree em { margin-left: 7px; }
.tree .ic { color: #999; height: 24px; }
.n { color: #f9a72b; font-size: 24px; width: 29px; }
.l0 { padding-left: 2px; }
.l1 { padding-left: 10px; }
.l1 .ic + .ic { margin: 0 10px 0 2px; }
.l2 { padding-left: 49px; }
.l2 .ic + .ic { margin: 0 10px 0 2px; }
.l3 { padding-left: 114px; }
.tree mark { height: 41px; line-height: 41px; padding: 0 2px; margin-left: 8px; box-sizing: border-box; }
.tree .framed { border: 1px solid #3a8fd8; line-height: 39px; margin-left: -3px; }

.prop-head { display: flex; align-items: stretch; height: 50px; flex: none; padding-left: 7px; }
.prop-head h2 { line-height: 48px; flex: 1; overflow: hidden; }
.which { display: flex; align-items: center; gap: 4px; padding-left: 6px; }
.facts { display: grid; grid-template-columns: 167px 1fr; grid-auto-rows: 24px; row-gap: 28px; flex: 1; background: #fff; padding: 26px 0 0 23px; }
.foot { display: flex; height: 46px; flex: none; padding: 2px 5px 0; align-items: center; background: repeating-linear-gradient(90deg, #8f8f8f 0 5px, #fff 5px 12px) left top / 100% 2px no-repeat, #f6f6f6; color: #666; gap: 8px; }
.foot button { height: 36px; padding: 0 11px; box-sizing: border-box; }
.foot .on { border: 2px solid #ccc; background: #fff; color: #000; font-weight: bold; }
.foot .run { width: 399px; justify-content: flex-start; }

.view { display: flex; flex-direction: column; flex: 1; min-width: 0; background: #000; }
.fabric { width: 100%; flex: 1; min-height: 0; display: block; background: #000; }
.short { margin-bottom: 24px; }
.region { font: 16px "DejaVu Sans Mono", monospace; fill: #9acd20; }

.split { display: flex; }
.reports { display: flex; flex-direction: column; width: 429px; flex: none; border-right: 2px solid #e0e0e0; background: #fff; }
.reports .pane { padding-right: 8px; }
.nudge { width: 6px; height: 24px; margin: -8px 2px 0 auto; }
.list { flex: 1; height: 120px; overflow: hidden; padding-left: 62px; }
.list li { height: 41px; line-height: 40px; }
.list mark { display: inline-block; }
.summary { display: flex; flex-direction: column; flex: 1; min-width: 0; }
.summary .bar { padding-left: 9px; }
.groups { display: grid; grid-template-columns: 364px 352px 483px; column-gap: 26px; flex: 1; align-content: start; padding: 33px 0 0 23px; }
.groups h3 { line-height: 34px; border-bottom: 2px solid #ccc; margin-bottom: 13px; }
.groups dl { display: flex; justify-content: space-between; padding: 0 5px 0 36px; }

.bottom { height: 34px; flex: none; background: #eee; box-sizing: border-box; padding: 5px 14px 0 0; text-align: right; font-size: 15px; color: #9a9a9a; }
.notes { position: absolute; left: 0; top: 0; width: 100%; height: 100%; pointer-events: none; }
.pill { position: absolute; right: -1px; top: 40px; width: 14px; height: 77px; box-sizing: border-box; border: 3px solid rgba(90, 90, 90, 0.8); border-radius: 8px; padding: 19px 2px 1px; }
.pill i { display: block; height: 100%; border-radius: 2px; background: linear-gradient(#ffc08a, #ff7a30); }
.ime { position: absolute; right: 0; top: 1097px; width: 49px; height: 126px; background: #ececec; display: flex; flex-direction: column; align-items: center; color: #111; font-size: 30px; line-height: 38px; }
.grip { width: 24px; height: 3px; margin: 8px 0 18px; border: solid #999; border-width: 1px 0; }
.ime .ic { width: 32px; height: 32px; margin-top: 10px; }
</style>
